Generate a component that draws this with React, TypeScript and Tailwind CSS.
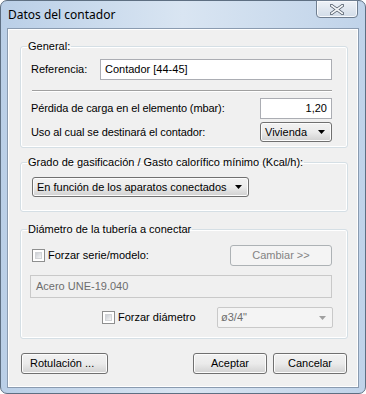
import React from "react";

const font = { fontFamily: "Tahoma, 'Liberation Sans', Arial, sans-serif" };

const Arrow = ({ disabled = false }: { disabled?: boolean }) => (
  <svg width="7" height="4" viewBox="0 0 7 4">
    <path d="M0 0h7L3.5 4z" fill={disabled ? "#a0a0a0" : "#000"} />
  </svg>
);

const Checkbox = () => (
  <span className="inline-block w-[13px] h-[13px] border border-[#8e8f8f] bg-white p-[2px]">
    <span className="block w-full h-full bg-linear-to-br from-[#cbcfd5] to-[#f6f6f6] border border-[#d2d4d7]" />
  </span>
);

const WinButton = ({
  label,
  className = "",
}: {
  label: string;
  className?: string;
}) => (
  <button
    className={`h-[21px] rounded-[3px] border border-[#707070] bg-linear-to-b from-[#f2f2f2] via-[#ebebeb] to-[#d2d2d2] text-[11px] text-black shadow-[inset_0_0_0_1px_#fcfcfc] ${className}`}
  >
    {label}
  </button>
);

const Combo = ({ label, className = "" }: { label: string; className?: string }) => (
  <div
    className={`flex items-center justify-between h-[20px] rounded-[3px] border border-[#707070] bg-linear-to-b from-[#f2f2f2] via-[#ebebeb] to-[#d0d0d0] pl-[4px] pr-[6px] text-[11px] shadow-[inset_0_0_0_1px_#fcfcfc] ${className}`}
  >
    <span>{label}</span>
    <Arrow />
  </div>
);

// groupbox: the legend sits on the top border, content padding lives in an inner div
const GroupBox = ({
  title,
  className = "",
  bodyClass = "",
  children,
}: {
  title: string;
  className?: string;
  bodyClass?: string;
  children: React.ReactNode;
}) => (
  <fieldset
    className={`w-[328px] rounded-[3px] border border-[#d5dfe5] shadow-[inset_0_0_0_1px_#ffffff] ${className}`}
  >
    <legend className="ml-[6px] px-[1px] text-[11px] leading-[13px]">{title}</legend>
    <div className={bodyClass}>{children}</div>
  </fieldset>
);

export default function App() {
  return (
    <div
      className="w-[366px] h-[394px] flex flex-col rounded-[7px] border border-[#5e6f82] bg-linear-to-r from-[#bacfe7] via-[#d9e5f2] to-[#c0d3e9] text-black"
      style={font}
    >
      {/* title bar */}
      <div className="relative h-[27px] flex items-start">
        <span
          className="ml-[7px] mt-[5px] text-[12px] text-black"
          style={{ fontFamily: "'Noto Sans', 'Open Sans', sans-serif" }}
        >
          Datos del contador
        </span>
        <div className="absolute right-[7px] top-[-1px] w-[42px] h-[18px] rounded-b-[4px] border border-[#6f7e90] bg-linear-to-b from-[#eef2f7] to-[#d2dce8] shadow-[inset_0_0_0_1px_#f7f9fc] flex items-center justify-center">
          <svg width="14" height="11" viewBox="0 0 14 11">
            <path
              d="M1.5 1.5L12.5 9.5M12.5 1.5L1.5 9.5"
              stroke="#4a5563"
              strokeWidth="3.2"
              strokeLinecap="round"
            />
            <path
              d="M1.5 1.5L12.5 9.5M12.5 1.5L1.5 9.5"
              stroke="#f4f6f8"
              strokeWidth="1.6"
              strokeLinecap="round"
            />
          </svg>
        </div>
      </div>

      {/* client area */}
      <div className="mx-[6px] h-[360px] flex flex-col border border-[#8a9bb0] bg-[#f0f0f0] shadow-[inset_0_0_0_1px_#ffffff] pl-[12px] pt-[11px]">
        <GroupBox title="General:" className="h-[108px]" bodyClass="pl-[10px] pr-[15px]">
          <div className="mt-[6px] flex items-center h-[21px]">
            <span className="text-[11px] w-[69px]">Referencia:</span>
            <div className="flex-1 h-[21px] border border-[#abadb3] bg-white flex items-center pl-[4px] text-[11px]">
              Contador [44-45]
            </div>
          </div>
          <div className="mt-[10px] ml-[1px] h-[2px] border-t border-[#a0a0a0] border-b border-b-white" />
          <div className="mt-[6px] flex items-center justify-between h-[21px]">
            <span className="text-[11px] tracking-[-0.1px]">Pérdida de carga en el elemento (mbar):</span>
            <div className="w-[72px] h-[21px] border border-[#abadb3] bg-white flex items-center justify-end pr-[4px] text-[11px]">
              1,20
            </div>
          </div>
          <div className="mt-[3px] flex items-center justify-between">
            <span className="text-[11px] tracking-[-0.1px]">Uso al cual se destinará el contador:</span>
            <Combo label="Vivienda" className="w-[72px]" />
          </div>
        </GroupBox>

        <GroupBox
          title="Grado de gasificación / Gasto calorífico mínimo (Kcal/h):"
          className="mt-[8px] h-[56px]"
          bodyClass="pl-[11px]"
        >
          <Combo label="En función de los aparatos conectados" className="mt-[8px] w-[217px]" />
        </GroupBox>

        <GroupBox
          title="Diámetro de la tubería a conectar"
          className="mt-[11px] h-[116px]"
          bodyClass="pl-[11px] pr-[15px]"
        >
          <div className="mt-[9px] flex items-center justify-between h-[21px]">
            <div className="flex items-center gap-[3px]">
              <Checkbox />
              <span className="text-[11px]">Forzar serie/modelo:</span>
            </div>
            <div className="w-[102px] h-[21px] rounded-[3px] border border-[#adb2b5] bg-[#f4f4f4] flex items-center justify-center text-[11px] text-[#838383]">
              Cambiar &gt;&gt;
            </div>
          </div>
          <div className="mt-[9px] -ml-[2px] h-[23px] border border-[#c9c9c9] bg-[#f0f0f0] flex items-center pl-[5px] text-[11px] text-[#6d6d6d]">
            Acero UNE-19.040
          </div>
          <div className="mt-[9px] flex items-center h-[21px]">
            <div className="ml-[70px] flex items-center gap-[3px] w-[115px]">
              <Checkbox />
              <span className="text-[11px]">Forzar diámetro</span>
            </div>
            <div className="flex-1 -mr-[1px] h-[21px] rounded-[2px] border border-[#c9c9c9] bg-[#f4f4f4] flex items-center justify-between pl-[3px] pr-[6px] text-[11px] text-[#6d6d6d]">
              <span>ø3/4"</span>
              <Arrow disabled />
            </div>
          </div>
        </GroupBox>

        <div className="mt-[14px] flex items-center pr-[11px]">
          <WinButton label="Rotulación ..." className="ml-[1px] w-[87px] text-left pl-[8px]" />
          <WinButton label="Aceptar" className="ml-auto w-[74px]" />
          <WinButton label="Cancelar" className="ml-[6px] w-[74px]" />
        </div>
      </div>
    </div>
  );
}
